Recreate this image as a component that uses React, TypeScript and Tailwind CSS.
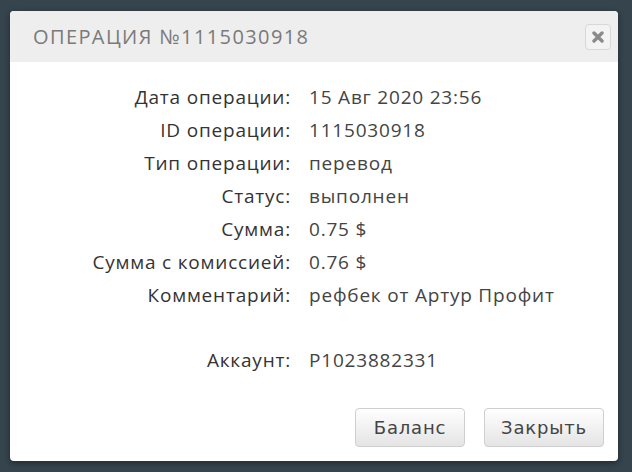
import React from "react";

const rows: [string, string][] = [
  ["Дата операции:", "15 Авг 2020 23:56"],
  ["ID операции:", "1115030918"],
  ["Тип операции:", "перевод"],
  ["Статус:", "выполнен"],
  ["Сумма:", "0.75 $"],
  ["Сумма с комиссией:", "0.76 $"],
  ["Комментарий:", "рефбек от Артур Профит"],
];

export default function App() {
  return (
    <div className="w-[632px] h-[472px] bg-[#35444d] pt-[11px] pl-[10px] overflow-hidden">
      <div className="w-[608px] h-[450px] bg-white rounded-[4px] overflow-hidden flex flex-col shadow-[0_2px_6px_rgba(0,0,0,0.4)]">
        {/* header */}
        <div className="h-[51px] bg-[#eeeeee] flex items-center justify-between pl-[23px] pr-[7px] shrink-0">
          <h2 className="text-[20px] tracking-[1.4px] text-[#7a7a7a] font-['Open_Sans',sans-serif] leading-none pt-[1px]">
            ОПЕРАЦИЯ №1115030918
          </h2>
          <button className="w-[26px] h-[26px] rounded-[4px] border border-[#d8d8d8] bg-[#f3f3f3] flex items-center justify-center">
            <svg width="12" height="12" viewBox="0 0 12 12">
              <path d="M2 2 L10 10 M10 2 L2 10" stroke="#8a8a8a" strokeWidth="3.4" strokeLinecap="round" />
            </svg>
          </button>
        </div>

        {/* body */}
        <div className="flex-1 flex flex-col font-['Open_Sans',sans-serif] text-[19px] tracking-[0.8px]">
          <div className="grid grid-cols-[281px_1fr] gap-x-[18px] gap-y-[8px] pt-[23px] leading-[25px]">
            {rows.map(([k, v]) => (
              <React.Fragment key={k}>
                <div className="text-right text-[#333]">{k}</div>
                <div className="text-[#444]">{v}</div>
              </React.Fragment>
            ))}
            <div className="text-right text-[#333] mt-[32px]">Аккаунт:</div>
            <div className="text-[#444] mt-[32px]">P1023882331</div>
          </div>

          <div className="mt-auto flex justify-end gap-[19px] pr-[14px] pb-[14px]">
            <button className="w-[110px] h-[39px] rounded-[4px] border border-[#cfcfcf] bg-gradient-to-b from-white to-[#e4e4e4] text-[18px] text-[#444] font-['DejaVu_Sans',sans-serif]">
              Баланс
            </button>
            <button className="w-[120px] h-[39px] rounded-[4px] border border-[#cfcfcf] bg-gradient-to-b from-white to-[#e4e4e4] text-[18px] text-[#444] font-['DejaVu_Sans',sans-serif]">
              Закрыть
            </button>
          </div>
        </div>
      </div>
    </div>
  );
}
